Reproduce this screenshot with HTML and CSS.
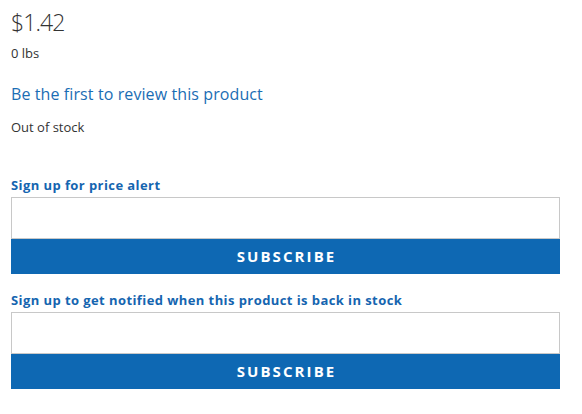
FILE: index.html
```html
<!DOCTYPE html>
<html>
<head>
<meta charset="utf-8">
<link rel="stylesheet" href="styles.css">
</head>
<body>
<div class="product">
  <div class="price">$1.42</div>
  <div class="weight">0 lbs</div>
  <a class="review" href="#">Be the first to review this product</a>
  <div class="stock">Out of stock</div>
  <form class="alert alert-price">
    <label class="alert-label">Sign up for price alert</label>
    <input class="alert-input" type="text">
    <button class="alert-button" type="button">SUBSCRIBE</button>
  </form>
  <form class="alert alert-stock">
    <label class="alert-label">Sign up to get notified when this product is back in stock</label>
    <input class="alert-input" type="text">
    <button class="alert-button" type="button">SUBSCRIBE</button>
  </form>
</div>
</body>
</html>
```
FILE: styles.css
```css
html, body {
  margin: 0;
  padding: 0;
  background: #fff;
}
body {
  font-family: "Open Sans", "DejaVu Sans", sans-serif;
  color: #333;
}
.product {
  width: 549px;
  padding: 4px 0 0 11px;
  display: flex;
  flex-direction: column;
}
.price {
  font-size: 23px;
  font-weight: 300;
  line-height: 36px;
  letter-spacing: -0.9px;
}
.weight {
  font-size: 13px;
  line-height: 18px;
  margin-top: 4px;
}
.review {
  font-size: 16px;
  line-height: 22px;
  color: #1a6db4;
  text-decoration: none;
  margin-top: 21px;
  letter-spacing: 0.1px;
}
.stock {
  font-size: 13px;
  line-height: 18px;
  margin-top: 13px;
}
.alert {
  display: flex;
  flex-direction: column;
  margin: 0;
}
.alert-price {
  margin-top: 40px;
}
.alert-stock {
  margin-top: 17px;
}
.alert-label {
  font-size: 13px;
  font-weight: 700;
  color: #1565b0;
  line-height: 18px;
  margin-bottom: 3px;
  letter-spacing: 0.42px;
}
.alert-input {
  box-sizing: border-box;
  height: 42px;
  width: 100%;
  border: 1px solid #c8c8c8;
  margin: 0;
  padding: 0 10px;
  background: #fff;
}
.alert-button {
  height: 35px;
  width: 100%;
  margin: 0;
  border: 0;
  background: #0e68b3;
  color: #fff;
  font-family: "Open Sans", "DejaVu Sans", sans-serif;
  font-size: 15px;
  font-weight: 700;
  letter-spacing: 2.1px;
  padding: 0 0 2px 2px;
}
```
